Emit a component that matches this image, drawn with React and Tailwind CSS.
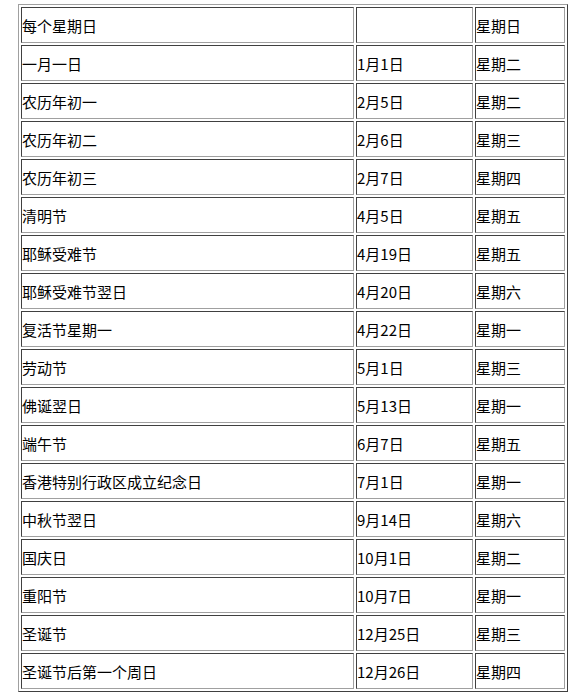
const rows = [
  ["每个星期日", "", "星期日"],
  ["一月一日", "1月1日", "星期二"],
  ["农历年初一", "2月5日", "星期二"],
  ["农历年初二", "2月6日", "星期三"],
  ["农历年初三", "2月7日", "星期四"],
  ["清明节", "4月5日", "星期五"],
  ["耶稣受难节", "4月19日", "星期五"],
  ["耶稣受难节翌日", "4月20日", "星期六"],
  ["复活节星期一", "4月22日", "星期一"],
  ["劳动节", "5月1日", "星期三"],
  ["佛诞翌日", "5月13日", "星期一"],
  ["端午节", "6月7日", "星期五"],
  ["香港特别行政区成立纪念日", "7月1日", "星期一"],
  ["中秋节翌日", "9月14日", "星期六"],
  ["国庆日", "10月1日", "星期二"],
  ["重阳节", "10月7日", "星期一"],
  ["圣诞节", "12月25日", "星期三"],
  ["圣诞节后第一个周日", "12月26日", "星期四"],
];

const cell =
  "h-[36px] p-0 align-middle border border-t-[#404040] border-l-[#404040] border-r-[#a0a0a0] border-b-[#a0a0a0]";

export default function App() {
  return (
    <div className="bg-white w-[582px] h-[697px] pt-[4px] pl-[18px] font-['Noto_Sans_CJK_SC','Noto_Sans_CJK_JP',sans-serif] text-[15px] leading-none text-black">
      <table className="table-fixed w-[550px] border-separate border-spacing-[2px] border border-t-[#a0a0a0] border-l-[#a0a0a0] border-r-[#404040] border-b-[#404040]">
        <tbody>
          {rows.map(([name, date, day], i) => (
            <tr key={i}>
              <td className={`${cell} w-[333px]`}>{name}</td>
              <td className={`${cell} w-[117px]`}>{date}</td>
              <td className={`${cell} w-[90px]`}>{day}</td>
            </tr>
          ))}
        </tbody>
      </table>
    </div>
  );
}
